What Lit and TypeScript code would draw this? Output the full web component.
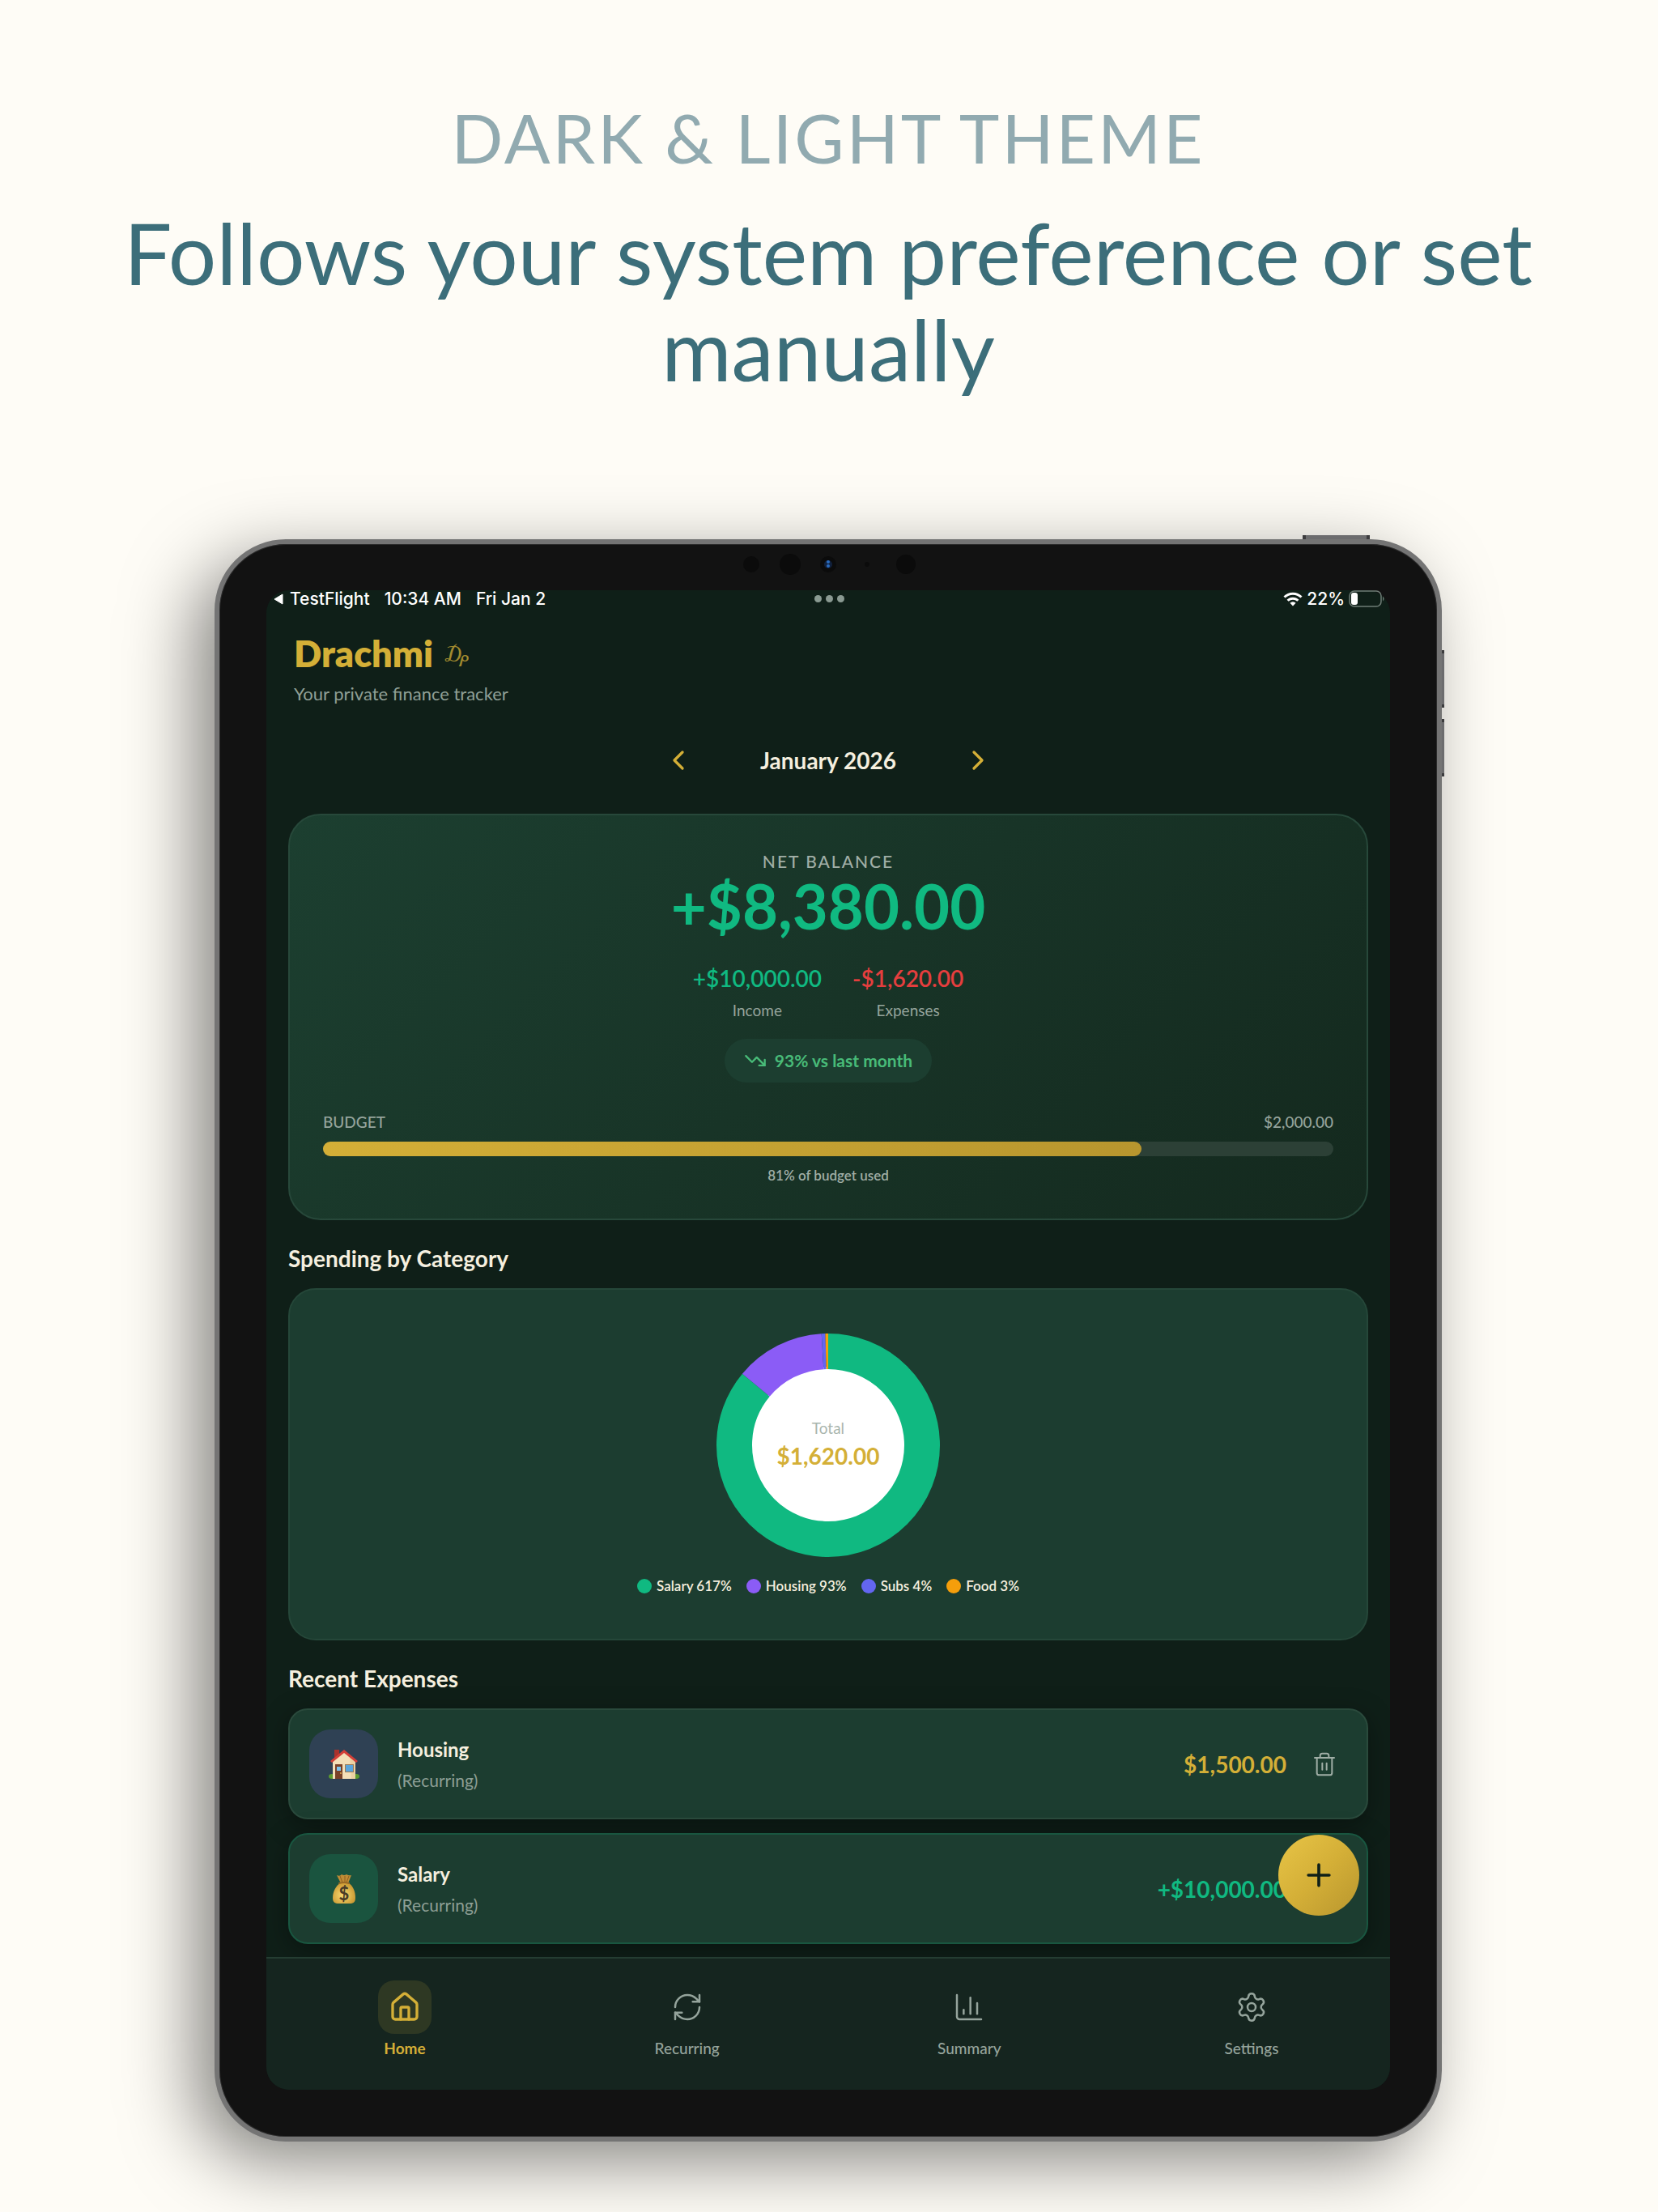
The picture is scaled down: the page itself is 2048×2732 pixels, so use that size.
import { LitElement, html, css, svg, nothing } from "lit";
import { customElement, property } from "lit/decorators.js";
import { styleMap } from "lit/directives/style-map.js";

type IconName =
  | "house"
  | "refresh"
  | "chart"
  | "settings"
  | "trash"
  | "left"
  | "right"
  | "plus"
  | "down";

const ICONS: Record<IconName, unknown> = {
  house: svg`
    <path d="M15 21v-8a1 1 0 0 0-1-1h-4a1 1 0 0 0-1 1v8" />
    <path d="M3 10a2 2 0 0 1 .709-1.528l7-5.999a2 2 0 0 1 2.582 0l7 5.999A2 2 0 0 1 21 10v9a2 2 0 0 1-2 2H5a2 2 0 0 1-2-2z" />`,
  refresh: svg`
    <path d="M3 12a9 9 0 0 1 9-9 9.75 9.75 0 0 1 6.74 2.74L21 8" />
    <path d="M21 3v5h-5" />
    <path d="M21 12a9 9 0 0 1-9 9 9.75 9.75 0 0 1-6.74-2.74L3 16" />
    <path d="M8 16H3v5" />`,
  chart: svg`
    <path d="M3 3v16a2 2 0 0 0 2 2h16" />
    <path d="M18 17V9" />
    <path d="M13 17V5" />
    <path d="M8 17v-3" />`,
  settings: svg`
    <path d="M9.671 4.136a2.34 2.34 0 0 1 4.659 0 2.34 2.34 0 0 0 3.319 1.915 2.34 2.34 0 0 1 2.33 4.033 2.34 2.34 0 0 0 0 3.831 2.34 2.34 0 0 1-2.33 4.033 2.34 2.34 0 0 0-3.319 1.915 2.34 2.34 0 0 1-4.659 0 2.34 2.34 0 0 0-3.32-1.915 2.34 2.34 0 0 1-2.33-4.033 2.34 2.34 0 0 0 0-3.831A2.34 2.34 0 0 1 6.35 6.051a2.34 2.34 0 0 0 3.319-1.915" />
    <circle cx="12" cy="12" r="3" />`,
  trash: svg`
    <path d="M3 6h18" />
    <path d="M19 6v14a2 2 0 0 1-2 2H7a2 2 0 0 1-2-2V6" />
    <path d="M8 6V4a2 2 0 0 1 2-2h4a2 2 0 0 1 2 2v2" />
    <path d="M10 11v6" />
    <path d="M14 11v6" />`,
  left: svg`<path d="m15 18-6-6 6-6" />`,
  right: svg`<path d="m9 18 6-6-6-6" />`,
  plus: svg`<path d="M5 12h14" /><path d="M12 5v14" />`,
  down: svg`<path d="M16 17h6v-6" /><path d="m22 17-8.5-8.5-5 5L2 7" />`,
};

@customElement("line-icon")
export class LineIcon extends LitElement {
  @property() name: IconName = "house";
  @property({ type: Number }) size = 24;
  @property({ type: Number }) weight = 2;

  static styles = css`
    :host {
      display: inline-flex;
    }
    svg {
      display: block;
      fill: none;
      stroke: currentColor;
      stroke-linecap: round;
      stroke-linejoin: round;
    }
  `;

  render() {
    return html`<svg
      width=${this.size}
      height=${this.size}
      viewBox="0 0 24 24"
      stroke-width=${this.weight}
      aria-hidden="true"
    >
      ${ICONS[this.name]}
    </svg>`;
  }
}

interface Slice {
  label: string;
  value: number;
  color: string;
}

const SLICES: Slice[] = [
  { label: "Salary", value: 617, color: "#10b981" },
  { label: "Housing", value: 93, color: "#8b5cf6" },
  { label: "Subs", value: 4, color: "#6366f1" },
  { label: "Food", value: 3, color: "#f59e0b" },
];

@customElement("spending-chart")
export class SpendingChart extends LitElement {
  static styles = css`
    :host {
      display: flex;
      flex-direction: column;
      align-items: center;
      gap: 24px;
    }
    .donut {
      display: grid;
      place-items: center;
    }
    .donut > * {
      grid-area: 1 / 1;
    }
    .donut svg {
      display: block;
    }
    .total {
      display: flex;
      flex-direction: column;
      align-items: center;
      gap: 8px;
      padding-bottom: 6px;
    }
    .total-label {
      font-size: 19px;
      line-height: 24px;
      color: #a9b5ae;
    }
    .total-value {
      font-size: 28px;
      line-height: 28px;
      font-weight: 700;
      color: #d4af37;
    }
    .legend {
      display: flex;
      flex-wrap: wrap;
      justify-content: center;
      gap: 18px;
      margin: 0;
      padding: 0;
      list-style: none;
    }
    .legend li {
      display: flex;
      align-items: center;
      gap: 6px;
      font-size: 17px;
      line-height: 24px;
      font-weight: 600;
      color: #f5efdf;
    }
    .dot {
      width: 18px;
      height: 18px;
      border-radius: 50%;
    }
  `;

  render() {
    const sum = SLICES.reduce((a, s) => a + s.value, 0);
    let start = 0;
    const arcs = SLICES.map((s) => {
      const arc = svg`<circle cx="138" cy="138" r="116" fill="none" stroke=${s.color}
        stroke-width="44" pathLength=${sum}
        stroke-dasharray="${s.value} ${sum - s.value}" stroke-dashoffset=${-start} />`;
      start += s.value;
      return arc;
    });
    return html`
      <div class="donut">
        <svg width="276" height="276" viewBox="0 0 276 276" aria-hidden="true">
          <circle cx="138" cy="138" r="97" fill="#fff" />
          <g transform="rotate(-90 138 138)">${arcs}</g>
        </svg>
        <div class="total">
          <span class="total-label">Total</span>
          <span class="total-value">$1,620.00</span>
        </div>
      </div>
      <ul class="legend">
        ${SLICES.map(
          (s) => html`<li>
            <span class="dot" style=${styleMap({ background: s.color })}></span
            >${s.label} ${s.value}%
          </li>`,
        )}
      </ul>
    `;
  }
}

const houseArt = html`<svg width="38" height="38" viewBox="0 0 38 38" aria-hidden="true">
  <ellipse cx="4" cy="34" rx="4" ry="3" fill="#5c9a2f" />
  <ellipse cx="34" cy="34" rx="4" ry="3" fill="#5c9a2f" />
  <path d="M7 1h6v10l-6 5z" fill="#a8322c" />
  <path d="M5 16 19 3l14 13v21H5z" fill="#f4dfb8" />
  <path d="M26 10l7 6v21h-5z" fill="#e6c892" opacity=".6" />
  <path d="M19 1 2 15l2 2L19 5l15 12 2-2z" fill="#d33f38" />
  <rect x="8" y="19" width="9" height="18" fill="#7a4128" />
  <rect x="10" y="22" width="5" height="5" fill="#7cc4ef" />
  <circle cx="15" cy="30" r="1" fill="#e0b050" />
  <rect x="20" y="19" width="11" height="10" fill="#9a7a55" />
  <rect x="21" y="20" width="9" height="8" fill="#5aa5dc" />
</svg>`;

const moneyArt = html`<svg width="38" height="38" viewBox="0 0 38 38" aria-hidden="true">
  <defs>
    <radialGradient id="bag" cx="45%" cy="60%" r="60%">
      <stop offset="0" stop-color="#f8dc74" />
      <stop offset="1" stop-color="#c9962f" />
    </radialGradient>
  </defs>
  <path d="M10 2q4 2 6-1 3 2 6 0 3 2 6 1l-4 10h-9z" fill="#c08c35" />
  <path d="M14 3l3 8M20 3v8M25 3l-3 8" stroke="#8f5f20" stroke-width="1" fill="none" />
  <path d="M15 11h9c6 4 9 11 9 19 0 6-3 7-7 7H12c-4 0-7-1-7-7 0-8 4-15 10-19z" fill="url(#bag)" />
  <path d="M13 12q6-2 12 0" stroke="#9b6a25" stroke-width="2" fill="none" stroke-linecap="round" />
  <text x="19" y="33" text-anchor="middle" font-family="Lato, sans-serif" font-size="22" font-weight="700" fill="#4a3b26">$</text>
</svg>`;

interface Entry {
  name: string;
  note: string;
  amount: string;
  income: boolean;
  art: unknown;
}

const ENTRIES: Entry[] = [
  { name: "Housing", note: "(Recurring)", amount: "$1,500.00", income: false, art: houseArt },
  { name: "Salary", note: "(Recurring)", amount: "+$10,000.00", income: true, art: moneyArt },
];

const TABS: { label: string; icon: IconName }[] = [
  { label: "Home", icon: "house" },
  { label: "Recurring", icon: "refresh" },
  { label: "Summary", icon: "chart" },
  { label: "Settings", icon: "settings" },
];

@customElement("finance-app")
export class FinanceApp extends LitElement {
  static styles = css`
    :host {
      display: flex;
      flex-direction: column;
      position: relative;
      border-radius: 28px;
      background: #0f1f18;
      color: #f5efdf;
    }
    button {
      display: inline-flex;
      align-items: center;
      justify-content: center;
      margin: 0;
      padding: 0;
      border: 0;
      background: none;
      color: inherit;
      font: inherit;
      cursor: pointer;
    }
    h1,
    h2,
    p {
      margin: 0;
      font-weight: inherit;
    }

    .status {
      display: grid;
      grid-template-columns: 1fr auto 1fr;
      align-items: center;
      height: 21px;
      padding: 0 6px 0 9px;
      font-family: Inter, "Liberation Sans", sans-serif;
      font-size: 21px;
      line-height: 21px;
      font-weight: 500;
      color: #fff;
    }
    .status-left,
    .status-right {
      display: flex;
      align-items: center;
    }
    .status-left {
      gap: 18px;
    }
    .status-right {
      justify-content: flex-end;
      gap: 5px;
    }
    .back {
      display: flex;
      align-items: center;
      gap: 8px;
    }
    .dots {
      display: flex;
      gap: 5px;
    }
    .dots i {
      width: 9px;
      height: 9px;
      border-radius: 50%;
      background: #8a9a92;
    }
    svg {
      display: block;
    }

    .brand {
      display: flex;
      flex-direction: column;
      gap: 10px;
      padding: 31px 34px 0;
    }
    .brand-row {
      display: flex;
      align-items: center;
      gap: 14px;
      color: #d4af37;
    }
    .brand-name {
      font-size: 45px;
      line-height: 52px;
      font-weight: 800;
    }
    .brand-mark {
      font-family: "Liberation Serif", serif;
      font-size: 30px;
      line-height: 52px;
      opacity: 0.75;
    }
    .tagline {
      font-size: 22px;
      line-height: 28px;
      color: #8f9f96;
    }

    .month {
      display: flex;
      align-items: center;
      justify-content: center;
      gap: 81px;
      padding: 48px 0 46px;
    }
    .month button {
      color: #d4af37;
    }
    .month h2 {
      font-size: 28px;
      line-height: 40px;
      font-weight: 700;
    }

    .content {
      display: flex;
      flex-direction: column;
      padding: 0 27px 16px;
      overflow: hidden;
    }
    .card {
      border: 2px solid #2a4a3c;
      background: #1c3d30;
    }
    .balance {
      display: flex;
      flex-direction: column;
      align-items: center;
      padding: 41px;
      border-radius: 40px;
      border-color: #27483a;
      background: linear-gradient(135deg, #1c3f30, #14291e);
    }
    .overline {
      font-size: 21px;
      line-height: 32px;
      font-weight: 500;
      letter-spacing: 2px;
      color: #a0aea6;
    }
    .net {
      font-size: 76px;
      line-height: 78px;
      font-weight: 700;
      color: #10b981;
    }
    .flows {
      display: flex;
      gap: 38px;
      padding-top: 34px;
    }
    .flow {
      display: flex;
      flex-direction: column;
      align-items: center;
      gap: 12px;
    }
    .flow-value {
      font-size: 28px;
      line-height: 32px;
      font-weight: 600;
    }
    .income {
      color: #10b981;
    }
    .spent {
      color: #e53e3e;
    }
    .small {
      font-size: 19px;
      line-height: 24px;
      color: #95a49c;
    }
    .trend {
      display: flex;
      align-items: center;
      gap: 10px;
      margin: 23px 0 37px;
      padding: 0 24px;
      border-radius: 27px;
      background: #1c3e30;
      font-size: 21px;
      line-height: 54px;
      font-weight: 700;
      color: #48bb78;
    }
    .budget {
      display: flex;
      flex-direction: column;
      align-self: stretch;
      gap: 12px;
    }
    .budget-row {
      display: flex;
      justify-content: space-between;
    }
    .medium {
      font-weight: 500;
    }
    .track {
      height: 18px;
      border-radius: 9px;
      background: #2c4036;
    }
    .fill {
      height: 100%;
      border-radius: 9px;
      background: linear-gradient(90deg, #d4af37, #b8962e);
    }
    .used {
      font-size: 17px;
      line-height: 24px;
      font-weight: 600;
      text-align: center;
      color: #a0aea6;
    }
    .section {
      padding: 30px 0 20px;
      font-size: 28px;
      line-height: 34px;
      font-weight: 700;
    }
    .spending {
      padding: 54px 41px 53px;
      border-radius: 34px;
      border-color: #254739;
    }

    .entries {
      display: flex;
      flex-direction: column;
      gap: 17px;
      margin: 0;
      padding: 0;
      list-style: none;
    }
    .entry {
      display: flex;
      align-items: center;
      gap: 24px;
      padding: 24px 36px 24px 24px;
      border-radius: 24px;
      box-shadow: 0 8px 32px rgba(0, 0, 0, 0.35);
    }
    .entry.is-income {
      border-color: #195640;
    }
    .tile {
      display: grid;
      place-items: center;
      width: 85px;
      height: 85px;
      border-radius: 26px;
      background: #2f4154;
    }
    .is-income .tile {
      background: #1a543f;
    }
    .entry-text {
      display: flex;
      flex-direction: column;
      flex: 1;
      gap: 8px;
    }
    .entry-name {
      font-size: 24px;
      line-height: 32px;
      font-weight: 700;
    }
    .entry-note {
      font-size: 21px;
      line-height: 28px;
      color: #8d9f95;
    }
    .entry-end {
      display: flex;
      align-items: center;
      gap: 31px;
    }
    .entry-amount {
      font-size: 28px;
      line-height: 32px;
      font-weight: 700;
      color: #d4af37;
    }
    .is-income .entry-amount {
      color: #10b981;
    }
    .delete {
      color: #a0aea6;
    }

    .fab {
      position: absolute;
      right: 38px;
      bottom: 215px;
      width: 100px;
      height: 100px;
      border-radius: 50%;
      background: linear-gradient(135deg, #e8c547, #d4af37 50%, #b8962e);
      color: #0f1f18;
    }

    .tabs {
      display: flex;
      justify-content: space-between;
      padding: 27px 111px 39px;
      border-top: 2px solid #243d32;
      border-radius: 0 0 28px 28px;
      background: #15251f;
    }
    .tab {
      display: flex;
      flex-direction: column;
      align-items: center;
      gap: 6px;
      width: 120px;
      font-size: 19px;
      line-height: 24px;
      font-weight: 500;
      color: #95a49c;
      text-decoration: none;
    }
    .tab-icon {
      display: grid;
      place-items: center;
      width: 66px;
      height: 66px;
      border-radius: 20px;
    }
    .tab.is-active {
      font-weight: 700;
      color: #d4af37;
    }
    .is-active .tab-icon {
      background: #2e3823;
    }
  `;

  private renderStatus() {
    return html`<div class="status">
      <div class="status-left">
        <span class="back">
          <svg width="12" height="14" viewBox="0 0 12 14" aria-hidden="true">
            <path d="M11 1v12L1 7z" fill="#fff" stroke="#fff" stroke-linejoin="round" />
          </svg>
          TestFlight
        </span>
        <span>10:34 AM</span>
        <span>Fri Jan 2</span>
      </div>
      <div class="dots"><i></i><i></i><i></i></div>
      <div class="status-right">
        <svg width="24" height="18" viewBox="0 0 24 18" aria-hidden="true">
          <g fill="none" stroke="#fff" stroke-width="3">
            <path d="M1.5 6.5a15 15 0 0 1 21 0" />
            <path d="M5.6 10.8a9 9 0 0 1 12.8 0" />
          </g>
          <path d="M12 17.5 8.4 13.8a5 5 0 0 1 7.2 0z" fill="#fff" />
        </svg>
        <span>22%</span>
        <svg width="45" height="21" viewBox="0 0 45 21" aria-hidden="true">
          <rect x="1" y="1" width="39" height="19" rx="6" fill="none" stroke="#6f7d76" stroke-width="1.5" />
          <rect x="3" y="3" width="8" height="15" rx="3" fill="#fff" />
          <path d="M42 7.5q3 3 0 6z" fill="#6f7d76" />
        </svg>
      </div>
    </div>`;
  }

  private renderBalance() {
    return html`<section class="card balance">
      <p class="overline">NET BALANCE</p>
      <p class="net">+$8,380.00</p>
      <div class="flows">
        <div class="flow">
          <span class="flow-value income">+$10,000.00</span>
          <span class="small">Income</span>
        </div>
        <div class="flow">
          <span class="flow-value spent">-$1,620.00</span>
          <span class="small">Expenses</span>
        </div>
      </div>
      <div class="trend">
        <line-icon name="down" size="28" weight="2"></line-icon>93% vs last month
      </div>
      <div class="budget">
        <div class="budget-row small medium">
          <span>BUDGET</span><span>$2,000.00</span>
        </div>
        <div class="track"><div class="fill" style=${styleMap({ width: "81%" })}></div></div>
        <p class="used">81% of budget used</p>
      </div>
    </section>`;
  }

  private renderEntry(e: Entry) {
    return html`<li class="card entry ${e.income ? "is-income" : ""}">
      <span class="tile">${e.art}</span>
      <div class="entry-text">
        <span class="entry-name">${e.name}</span>
        <span class="entry-note">${e.note}</span>
      </div>
      <div class="entry-end">
        <span class="entry-amount">${e.amount}</span>
        <button class="delete" aria-label="Delete ${e.name}">
          <line-icon name="trash" size="32" weight="1.5"></line-icon>
        </button>
      </div>
    </li>`;
  }

  render() {
    return html`
      ${this.renderStatus()}
      <header class="brand">
        <div class="brand-row">
          <h1 class="brand-name">Drachmi</h1>
          <span class="brand-mark">₯</span>
        </div>
        <p class="tagline">Your private finance tracker</p>
      </header>
      <div class="month">
        <button aria-label="Previous month">
          <line-icon name="left" size="40" weight="2"></line-icon>
        </button>
        <h2>January 2026</h2>
        <button aria-label="Next month">
          <line-icon name="right" size="40" weight="2"></line-icon>
        </button>
      </div>
      <main class="content">
        ${this.renderBalance()}
        <h2 class="section">Spending by Category</h2>
        <section class="card spending"><spending-chart></spending-chart></section>
        <h2 class="section">Recent Expenses</h2>
        <ul class="entries">
          ${ENTRIES.map((e) => this.renderEntry(e))}
        </ul>
      </main>
      <nav class="tabs">
        ${TABS.map(
          (t, i) => html`<a
            class="tab ${i === 0 ? "is-active" : ""}"
            href="#${t.label.toLowerCase()}"
            aria-current=${i === 0 ? "page" : nothing}
          >
            <span class="tab-icon">
              <line-icon name=${t.icon} size="40" weight=${i === 0 ? 2 : 1.5}></line-icon>
            </span>
            ${t.label}
          </a>`,
        )}
      </nav>
      <button class="fab" aria-label="Add entry">
        <line-icon name="plus" size="44" weight="2"></line-icon>
      </button>
    `;
  }
}

@customElement("app-root")
export class AppRoot extends LitElement {
  static styles = css`
    :host {
      display: flex;
      flex-direction: column;
      align-items: center;
      box-sizing: border-box;
      min-height: 100vh;
      padding: 120px 101px 87px 99px;
      overflow: hidden;
      background: #fefcf6;
      font-family: Lato, "Liberation Sans", sans-serif;
    }
    .hero {
      display: flex;
      flex-direction: column;
      align-items: center;
      gap: 32px;
      padding-bottom: 176px;
      text-align: center;
    }
    .hero p,
    .hero h1 {
      margin: 0;
      font-weight: 400;
    }
    .eyebrow {
      font-size: 84px;
      line-height: 100px;
      letter-spacing: 3px;
      color: #91aab0;
    }
    .headline {
      font-size: 105px;
      line-height: 119px;
      color: #3c6e7a;
    }
    .device {
      position: relative;
      box-sizing: border-box;
      width: 100%;
      max-width: 1516px;
      padding: 57px 58px 58px;
      border: 6px solid #747474;
      border-radius: 88px;
      background: #121212;
      box-shadow:
        inset 0 0 0 1px #2c2c2c,
        -25px 25px 90px -4px rgba(0, 0, 0, 0.5);
    }
    .sensors {
      position: absolute;
      top: 10px;
      left: 50%;
      transform: translateX(-50%);
    }
    .key {
      position: absolute;
      background: #6c6c6e;
      border: 0 solid #3c3c3e;
    }
    .power {
      top: -11px;
      right: 83px;
      width: 83px;
      height: 5px;
      box-sizing: border-box;
      border-width: 0 4px;
    }
    .volume {
      right: -9px;
      width: 3px;
      height: 71px;
      box-sizing: border-box;
      border-width: 4px 0;
    }
    .up {
      top: 131px;
    }
    .low {
      top: 216px;
    }
  `;

  render() {
    return html`
      <header class="hero">
        <p class="eyebrow">DARK &amp; LIGHT THEME</p>
        <h1 class="headline">Follows your system preference or set manually</h1>
      </header>
      <div class="device">
        <span class="key power"></span>
        <span class="key volume up"></span>
        <span class="key volume low"></span>
        <svg class="sensors" width="220" height="30" viewBox="0 0 220 30" aria-hidden="true">
          <g fill="#0b0b0b">
            <circle cx="15" cy="15" r="10" />
            <circle cx="63" cy="15" r="13" />
            <circle cx="110" cy="15" r="10" />
            <circle cx="158" cy="15" r="3" />
            <circle cx="206" cy="15" r="12" />
          </g>
          <circle cx="110" cy="15" r="5" fill="#10203c" />
          <circle cx="110" cy="12" r="2" fill="#2a6cc0" />
          <circle cx="110" cy="17" r="2" fill="#2a6cc0" />
        </svg>
        <finance-app></finance-app>
      </div>
    `;
  }
}
